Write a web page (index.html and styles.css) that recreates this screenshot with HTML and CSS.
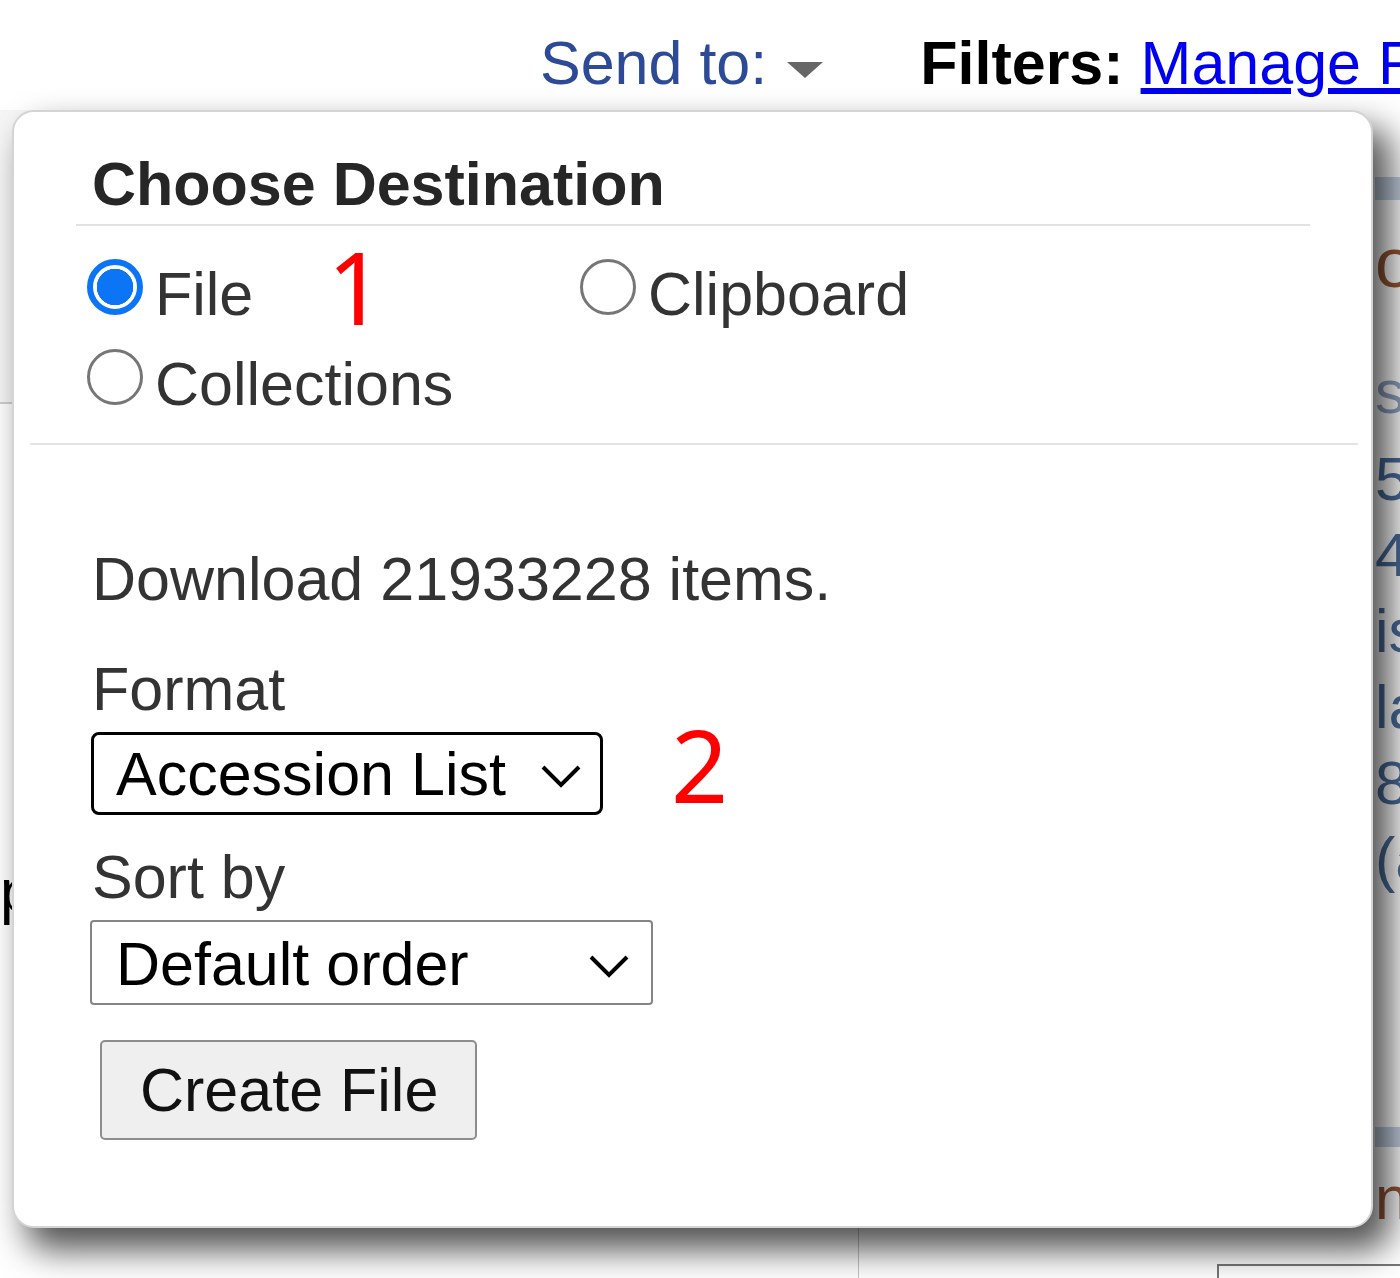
FILE: index.html
```html
<!DOCTYPE html>
<html lang="en">
<head>
	<meta charset="UTF-8">
	<meta name="viewport" content="width=device-width, initial-scale=1.0">
	<title>Send to</title>
	<link rel="stylesheet" href="styles.css">
</head>
<body>
<div class="page">

	<div class="topbar">
		<a class="sendto">Send to:<span class="caret"></span></a>
		<div class="filters"><b>Filters:</b> <a href="#" class="link">Manage Filters</a></div>
	</div>

	<div class="page-body">
		<div class="col-left">
			<div class="left-head"></div>
			<div class="left-text">pubmed</div>
		</div>
		<div class="col-center"></div>
		<div class="col-right">
			<div class="facets">
				<div class="facet-bar"></div>
				<div class="facet-title">open access</div>
				<div class="facet-sub">sequences</div>
				<ul class="facet-list">
					<li>5,271</li>
					<li>4,963</li>
					<li>isolates</li>
					<li>lab strains</li>
					<li>8,105</li>
					<li>(all)</li>
				</ul>
				<div class="facet-bar facet-bar-2"></div>
				<div class="facet-title-2">nt</div>
			</div>
			<div class="search-box"></div>
		</div>
	</div>

	<!-- send to popup -->
	<div class="popup">
		<div class="popup-head">
			<h3>Choose Destination</h3>
		</div>

		<div class="dest-options">
			<label class="dest"><input type="radio" name="dest" checked><span>File</span><span class="mark mark-1">1</span></label>
			<label class="dest"><input type="radio" name="dest"><span>Clipboard</span></label>
			<label class="dest"><input type="radio" name="dest"><span>Collections</span></label>
		</div>

		<div class="dest-body">
			<p class="count">Download 21933228 items.</p>

			<div class="field-label">Format</div>
			<div class="field-row">
				<div class="select select-focus">
					<span>Accession List</span>
					<svg width="42" height="24" viewBox="0 0 42 24"><polyline points="3,3 21,21 39,3" fill="none" stroke="#000" stroke-width="4"/></svg>
				</div>
				<span class="mark mark-2">2</span>
			</div>

			<div class="field-label field-label-2">Sort by</div>
			<div class="field-row">
				<div class="select select-plain">
					<span>Default order</span>
					<svg width="42" height="24" viewBox="0 0 42 24"><polyline points="3,3 21,21 39,3" fill="none" stroke="#000" stroke-width="4"/></svg>
				</div>
			</div>

			<button class="btn">Create File</button>
		</div>
	</div>

</div>
</body>
</html>
```

FILE: styles.css
```css
body {
	margin: 0;
	font-family: 'Liberation Sans', Arial, sans-serif;
	background: #fff;
}
.page {
	position: relative;
	width: 1400px;
	height: 1278px;
	overflow: hidden;
}

/* page behind the popup */
.topbar {
	display: flex;
	height: 110px;
	box-sizing: border-box;
	padding: 28px 0 0 540px;
	font-size: 61px;
	line-height: 70px;
	white-space: nowrap;
}
.sendto {
	display: flex;
	color: #2c4a96;
}
.caret {
	width: 0;
	height: 0;
	margin: 34px 0 0 20px;
	border-left: 18px solid transparent;
	border-right: 18px solid transparent;
	border-top: 16px solid #666;
}
.filters {
	margin-left: 97px;
	color: #000;
}
.link {
	color: #0000ee;
	text-decoration: underline;
}
.page-body {
	display: grid;
	grid-template-columns: 858px 359px 1fr;
	height: 1168px;
}
.left-head {
	height: 292px;
	border-bottom: 2px solid #cfcfcf;
	background: #f6f6f6;
}
.left-text {
	margin-top: 452px;
	font-size: 61px;
	line-height: 70px;
	color: #000;
}
.col-center {
	border-left: 1px solid #c4c4c4;
}
.facets {
	margin-left: 158px;
	font-size: 61px;
	white-space: nowrap;
}
.facet-bar {
	margin-top: 67px;
	height: 23px;
	background: #c3d0e0;
}
.facet-title {
	margin-top: 28px;
	font-size: 70px;
	line-height: 70px;
	color: #985735;
}
.facet-sub {
	margin-top: 56px;
	line-height: 76px;
	color: #8fa3c0;
}
.facet-list {
	list-style: none;
	margin: 11px 0 0;
	padding: 0;
	line-height: 76px;
	color: #4a6d9c;
}
.facet-bar-2 {
	margin-top: 230px;
	height: 20px;
}
.facet-title-2 {
	margin-top: 16px;
	line-height: 70px;
	color: #985735;
}
.search-box {
	margin-top: 31px;
	width: 300px;
	height: 60px;
	border: 2px solid #777;
}

/* popup */
.popup {
	position: absolute;
	left: 12px;
	top: 110px;
	width: 1361px;
	height: 1118px;
	box-sizing: border-box;
	background: #fff;
	border: 2px solid #d4d4d4;
	border-radius: 22px;
	box-shadow: 16px 20px 34px 2px rgba(0, 0, 0, 0.68);
	color: #333;
	font-size: 61px;
	line-height: 70px;
}
.popup-head {
	margin: 0 61px 0 62px;
	padding: 37px 0 5px 16px;
	border-bottom: 2px solid #e2e2e2;
}
.popup-head h3 {
	margin: 0;
	font-size: 61px;
	line-height: 70px;
	color: #262626;
}
.dest-options {
	display: grid;
	grid-template-columns: 493px auto;
	row-gap: 20px;
	margin: 0 13px 0 16px;
	padding: 33px 0 24px 57px;
	border-bottom: 2px solid #e4e4e4;
}
.dest {
	display: flex;
	align-items: flex-start;
	gap: 12px;
	color: #333;
}
.dest input {
	appearance: none;
	-webkit-appearance: none;
	width: 56px;
	height: 56px;
	margin: 0;
	box-sizing: border-box;
	border: 3px solid #767676;
	border-radius: 50%;
	background: #fff;
	flex: none;
}
.dest input:checked {
	border: 6px solid #0b75f5;
	background: radial-gradient(circle, #0b75f5 0 18px, #fff 18.5px);
}
.mark {
	font-family: 'Noto Sans', 'Open Sans', sans-serif;
	font-size: 100px;
	line-height: 70px;
	color: #ff0000;
}
.mark-1 {
	margin: -8px 0 0 62px;
}
.dest-body {
	padding: 99px 0 0 78px;
}
.count {
	margin: 0 0 40px;
}
.field-label {
	margin-bottom: 8px;
}
.field-label-2 {
	margin-top: 27px;
}
.field-row {
	display: flex;
	align-items: flex-start;
}
.select {
	display: flex;
	justify-content: space-between;
	box-sizing: border-box;
	background: #fff;
	color: #000;
}
.select svg {
	align-self: center;
}
.select-focus {
	width: 512px;
	height: 83px;
	margin-left: -1px;
	padding: 4px 18px 0 22px;
	border: 3px solid #000;
	border-radius: 8px;
}
.select-plain {
	width: 563px;
	height: 85px;
	margin-left: -2px;
	padding: 7px 21px 0 24px;
	border: 2px solid #858585;
	border-radius: 4px;
}
.mark-2 {
	margin: -3px 0 0 68px;
}
.btn {
	display: block;
	width: 377px;
	height: 100px;
	margin: 35px 0 0 8px;
	box-sizing: border-box;
	padding: 0 0 0 38px;
	text-align: left;
	font-family: 'Liberation Sans', Arial, sans-serif;
	font-size: 61px;
	line-height: 70px;
	color: #111;
	background: #efefef;
	border: 2px solid #8d8d8d;
	border-radius: 5px;
}
```
